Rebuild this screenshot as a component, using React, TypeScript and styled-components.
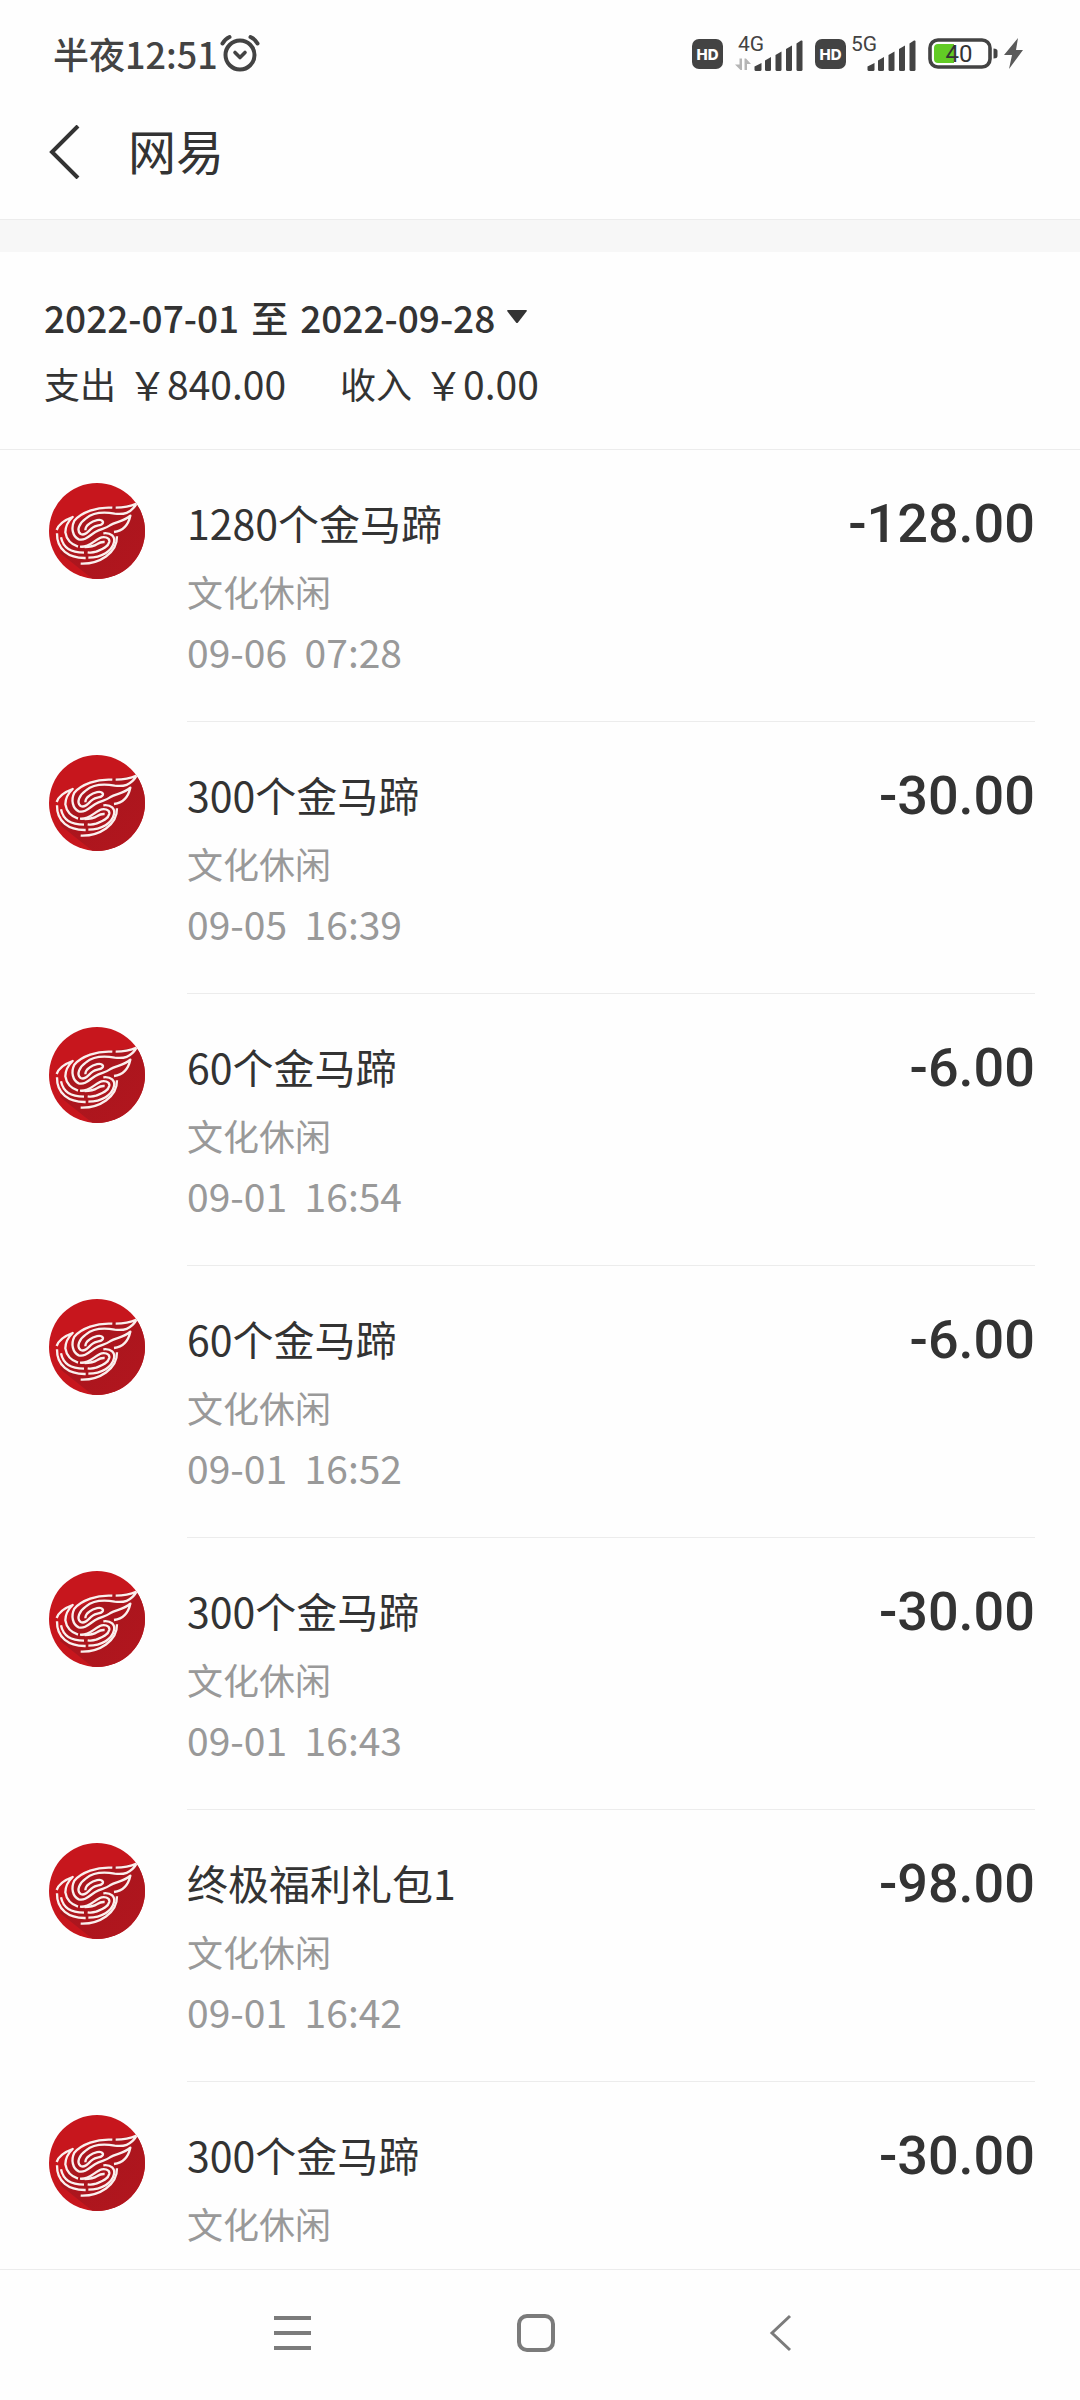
import React from "react";
import styled, { createGlobalStyle } from "styled-components";

const GlobalStyle = createGlobalStyle`
  * {
    box-sizing: border-box;
  }
  body {
    margin: 0;
    background: #fefefe;
    color: #333;
    font-family: "Noto Sans CJK SC", "Noto Sans", sans-serif;
  }
  button {
    border: 0;
    padding: 0;
    background: none;
    color: inherit;
    font: inherit;
    cursor: pointer;
  }
`;

const Page = styled.div`
  display: flex;
  flex-direction: column;
  height: 100vh;
`;

const StatusBar = styled.div`
  display: flex;
  align-items: center;
  justify-content: space-between;
  height: 108px;
  padding: 0 56px 0 53px;
  color: #434343;
`;

const Clock = styled.div`
  display: flex;
  align-items: center;
  gap: 2px;
  padding-bottom: 2px;
  font-size: 36px;
  font-weight: 500;
  line-height: 52px;
`;

const StatusIcons = styled.div`
  display: flex;
  align-items: center;
  gap: 12px;
`;

const SimGroup = styled.div<{ $gap: number }>`
  display: flex;
  align-items: center;
  gap: ${(p) => p.$gap}px;
`;

const Header = styled.header`
  display: flex;
  align-items: center;
  gap: 48px;
  height: 112px;
  padding: 0 48px 24px;
  border-bottom: 1px solid #ececec;
`;

const BackButton = styled.button`
  display: flex;
`;

const Title = styled.h1`
  margin: 0;
  padding-bottom: 6px;
  font-size: 48px;
  font-weight: 400;
  line-height: 60px;
`;

const Divider = styled.div`
  flex: none;
  height: 32px;
  background: #f7f7f7;
`;

const Summary = styled.section`
  flex: none;
  height: 198px;
  padding: 35px 44px 0;
  border-bottom: 1px solid #ececec;
`;

const RangeButton = styled.button`
  display: flex;
  align-items: center;
  gap: 12px;
  font-size: 37px;
  font-weight: 500;
  line-height: 60px;
`;

const Totals = styled.div`
  display: flex;
  gap: 54px;
  margin-top: 6px;
`;

const Total = styled.div`
  display: flex;
  align-items: center;
  gap: 12px;
  font-size: 36px;
  line-height: 60px;
`;

const TotalValue = styled.span`
  font-size: 39px;
`;

const List = styled.ul`
  flex: 1;
  min-height: 0;
  margin: 0;
  padding: 0;
  overflow: hidden;
  list-style: none;
`;

const Row = styled.li`
  display: flex;
  gap: 42px;
  height: 272px;
  padding: 0 45px 0 49px;
`;

const LogoBox = styled.div`
  flex: none;
  padding-top: 33px;
`;

const RowBody = styled.div`
  display: flex;
  flex: 1;
  justify-content: space-between;
  padding-top: 42px;
  border-bottom: 1px solid #ececec;
`;

const ItemName = styled.div`
  margin-bottom: 9px;
  font-size: 41px;
  line-height: 60px;
`;

const Category = styled.div`
  color: #999;
  font-size: 36px;
  line-height: 60px;
`;

const Time = styled.div`
  color: #999;
  font-size: 39px;
  line-height: 60px;
  white-space: pre;
`;

const Amount = styled.div`
  font-family: Roboto, sans-serif;
  font-size: 54px;
  font-weight: 500;
  line-height: 64px;
`;

const NavBar = styled.nav`
  display: flex;
  flex: none;
  align-items: center;
  justify-content: center;
  gap: 204px;
  height: 131px;
  padding: 0 8px 4px 0;
  border-top: 1px solid #ececec;
  color: #7b7b7b;
`;

const NavButton = styled.button`
  display: flex;
`;

type TRecord = {
  name: string;
  time?: string;
  amount: string;
};

const records: Array<TRecord> = [
  { name: "1280个金马蹄", time: "09-06  07:28", amount: "-128.00" },
  { name: "300个金马蹄", time: "09-05  16:39", amount: "-30.00" },
  { name: "60个金马蹄", time: "09-01  16:54", amount: "-6.00" },
  { name: "60个金马蹄", time: "09-01  16:52", amount: "-6.00" },
  { name: "300个金马蹄", time: "09-01  16:43", amount: "-30.00" },
  { name: "终极福利礼包1", time: "09-01  16:42", amount: "-98.00" },
  { name: "300个金马蹄", amount: "-30.00" },
];

const AlarmIcon = () => (
  <svg width="40" height="38" viewBox="0 0 40 38" fill="none" stroke="currentColor" strokeLinecap="round">
    <circle cx="20" cy="21" r="14.5" strokeWidth="4" />
    <path d="M15 18.5l5 5 5-5" strokeWidth="3.6" strokeLinejoin="round" />
    <path d="M2.5 9.5Q5 5 9.5 3M37.5 9.5Q35 5 30.5 3" strokeWidth="4" />
  </svg>
);

const HdIcon = () => (
  <svg width="31" height="30" viewBox="0 0 31 30">
    <rect width="31" height="30" rx="7" fill="#434343" />
    <text x="15.5" y="20.5" fill="#fff" fontFamily="Inter, sans-serif" fontSize="15" fontWeight="800" textAnchor="middle">
      HD
    </text>
  </svg>
);

const SignalIcon = ({ label, arrows }: { label: string; arrows?: boolean }) => (
  <svg width="68" height="50" viewBox="0 -6 68 50" fill="currentColor">
    <text x="3" y="16" fontFamily="Roboto, sans-serif" fontSize="21">
      {label}
    </text>
    {arrows && <path d="M4.5 23.5H7V35H5.5L0 29.5h4.5zM9.5 23.5H11L16 29h-4v6H9.5z" fill="#b5b5b5" />}
    <path d="M19.5 31.5l7-3.5v6.5q0 1.5-1.5 1.5h-4q-1.5 0-1.500-1.5z" />
    <path d="M30 25.5l6-3.5v12.5q0 1.5-1.5 1.5h-3q-1.5 0-1.5-1.5z" />
    <path d="M40.5 20l6-3.5v18q0 1.5-1.5 1.5h-3q-1.5 0-1.5-1.5z" />
    <path d="M51 14l6-3.5v24q0 1.5-1.5 1.5h-3q-1.5 0-1.5-1.5z" />
    <path d="M61.5 8.5l4.5-3q1.5-.5 1.5 1v28q0 1.5-1.5 1.5h-3q-1.5 0-1.5-1.5z" />
  </svg>
);

const BatteryIcon = () => (
  <svg width="96" height="34" viewBox="0 0 96 34">
    <rect x="2" y="3" width="60" height="27" rx="8" fill="none" stroke="#434343" strokeWidth="3.6" />
    <path d="M10 7h16v19H10q-4 0-4-4V11q0-4 4-4z" fill="#62cb25" />
    <path d="M65.5 11.5q4 0 4 2.5v5q0 2.5-4 2.5z" fill="#434343" />
    <text x="31" y="25" fill="#333" fontFamily="Roboto, sans-serif" fontSize="24" textAnchor="middle">
      40
    </text>
    <path d="M90 1L76 18h8l-3 14 14-19h-7z" fill="#5a5a5a" />
  </svg>
);

const LogoIcon = () => (
  <svg width="96" height="96" viewBox="27 30 288 288" role="img" aria-label="网易">
    <defs>
      <clipPath id="disc">
        <circle cx="171" cy="174" r="144" />
      </clipPath>
      <linearGradient id="shade" x1="0" y1="0" x2="1" y2="1">
        <stop offset="0" stopColor="#a5151d" />
        <stop offset="1" stopColor="#b3161e" />
      </linearGradient>
    </defs>
    <g clipPath="url(#disc)">
      <rect x="27" y="30" width="288" height="288" fill="#c7161d" />
      <path d="M288 92L320 124V320H160L60 240L100 150L180 104Z" fill="url(#shade)" />
      <g fill="none" stroke="#faf0ee" strokeWidth="7" strokeLinejoin="round">
        <path d="M227 104Q262 104 290 92C272 122 250 125 224 122C190 116 160 118 138 136C118 150 108 172 122 183C136 190 144 174 158 164C170 155 190 159 189 147C184 135 160 142 148 152Q136 160 136 172" />
        <path d="M217 104C170 101 125 118 103 143C92 165 98 190 116 199C136 204 148 188 166 177C184 167 196 167 210 157C228 145 252 146 271 128C264 160 244 174 222 177" />
        <path d="M50 171Q59 146 98 132Q76 153 76 178C80 202 94 214 114 221" />
        <path d="M120 221C146 224 158 206 178 196C192 188 210 194 208 206C204 224 182 230 168 236Q156 240 143 238" />
        <path d="M134 222Q158 222 172 213Q182 206 194 207" />
        <path d="M63 193C70 226 92 238 132 239" />
        <path d="M51 181C50 230 86 256 137 255" />
        <path d="M190 181C214 178 226 192 222 208C216 234 186 254 145 254" />
        <path d="M122 272C178 274 232 240 231 190" />
      </g>
    </g>
  </svg>
);

const App: React.FC = () => {
  return (
    <Page>
      <GlobalStyle />
      <StatusBar>
        <Clock>
          半夜12:51
          <AlarmIcon />
        </Clock>
        <StatusIcons>
          <SimGroup $gap={12}>
            <HdIcon />
            <SignalIcon label="4G" arrows />
          </SimGroup>
          <SimGroup $gap={2}>
            <HdIcon />
            <SignalIcon label="5G" />
          </SimGroup>
          <BatteryIcon />
        </StatusIcons>
      </StatusBar>
      <Header>
        <BackButton aria-label="返回">
          <svg width="32" height="54" viewBox="0 0 32 54" fill="none" stroke="#333" strokeWidth="4">
            <path d="M30 1L4 27l26 26" />
          </svg>
        </BackButton>
        <Title>网易</Title>
      </Header>
      <Divider />
      <Summary>
        <RangeButton>
          <span>2022-07-01</span>
          <span>至</span>
          <span>2022-09-28</span>
          <svg width="20" height="14" viewBox="0 0 20 14" fill="#333">
            <path d="M1 0h18q1.500 0 .5 1.500l-8.500 11q-1 1-2 0L.5 1.500Q-.5 0 1 0z" />
          </svg>
        </RangeButton>
        <Totals>
          <Total>
            支出 <TotalValue>￥840.00</TotalValue>
          </Total>
          <Total>
            收入 <TotalValue>￥0.00</TotalValue>
          </Total>
        </Totals>
      </Summary>
      <List>
        {records.map((i: TRecord, idx: number) => {
          return (
            <Row key={idx}>
              <LogoBox>
                <LogoIcon />
              </LogoBox>
              <RowBody>
                <div>
                  <ItemName>{i.name}</ItemName>
                  <Category>文化休闲</Category>
                  {i.time && <Time>{i.time}</Time>}
                </div>
                <Amount>{i.amount}</Amount>
              </RowBody>
            </Row>
          );
        })}
      </List>
      <NavBar>
        <NavButton aria-label="菜单">
          <svg width="40" height="40" viewBox="0 0 40 40" stroke="currentColor" strokeWidth="4">
            <path d="M2 5h37M2 20h37M2 35h37" />
          </svg>
        </NavButton>
        <NavButton aria-label="主页">
          <svg width="40" height="40" viewBox="0 0 40 40" fill="none" stroke="currentColor" strokeWidth="4">
            <rect x="3" y="3" width="34" height="34" rx="8" />
          </svg>
        </NavButton>
        <NavButton aria-label="后退">
          <svg width="40" height="40" viewBox="0 0 40 40" fill="none" stroke="currentColor" strokeWidth="3">
            <path d="M30 3L12 20l18 17" />
          </svg>
        </NavButton>
      </NavBar>
    </Page>
  );
};

export default App;
